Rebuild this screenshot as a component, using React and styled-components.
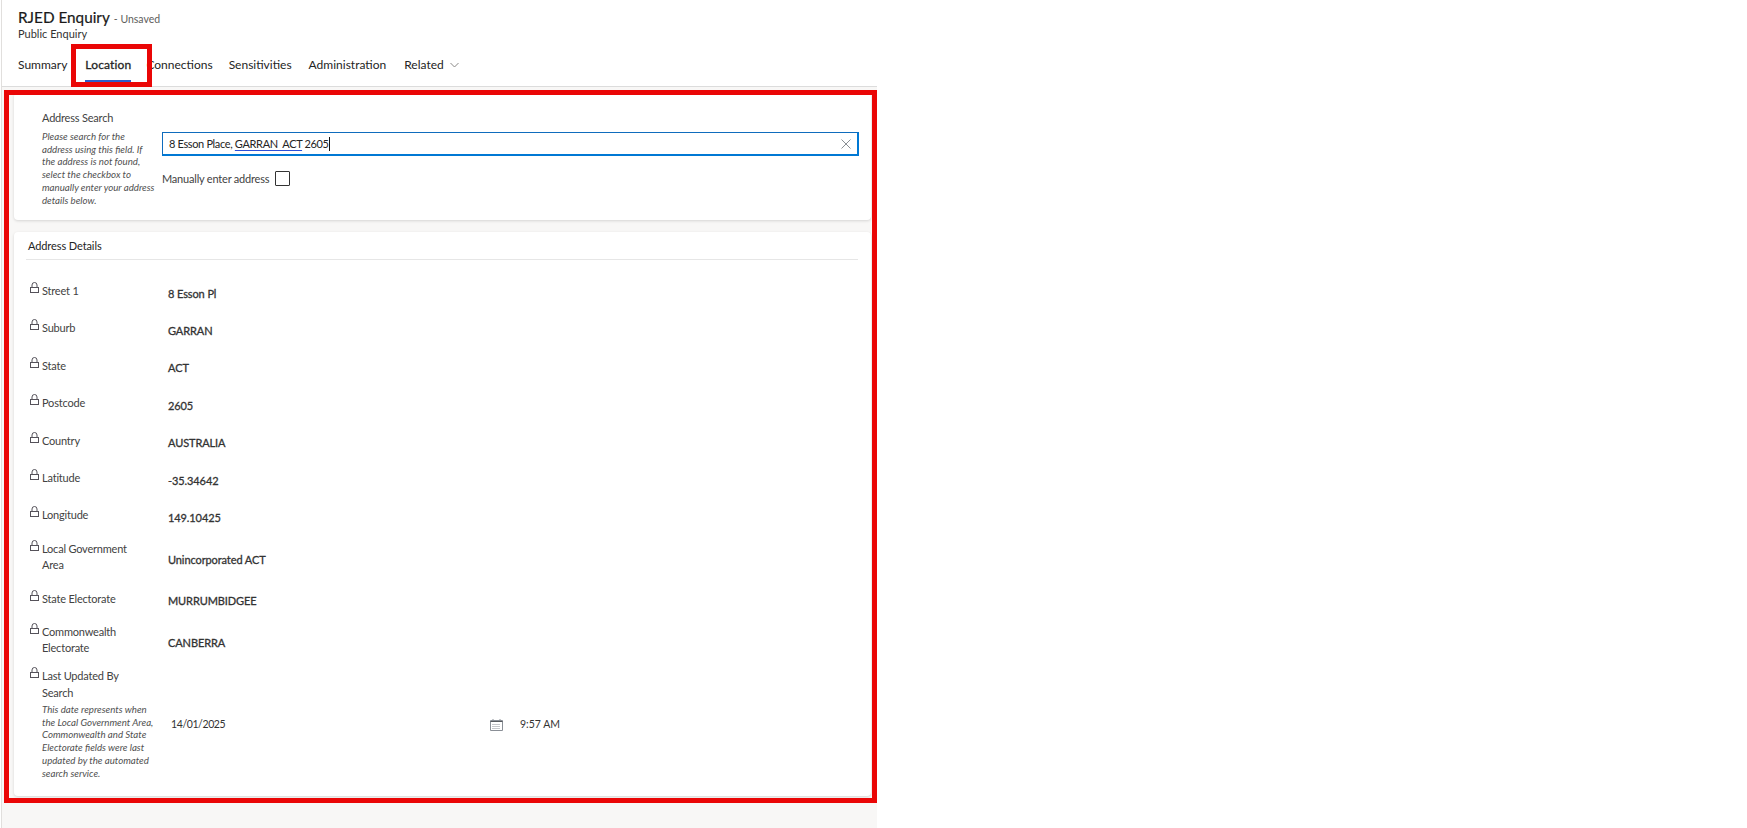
import styled, { createGlobalStyle } from 'styled-components';

const GlobalStyle = createGlobalStyle`
  html, body {
    margin: 0;
    padding: 0;
    background: #fff;
    font-family: "Lato", "Open Sans", sans-serif;
    color: #242424;
  }
  * { box-sizing: border-box; }
`;

const Page = styled.div`
  position: relative;
  width: 1747px;
  height: 828px;
  overflow: hidden;
`;

const Panel = styled.div`
  width: 876px;
  height: 828px;
  border-left: 1px solid #e1dfdd;
  margin-left: 1px;
  display: flex;
  flex-direction: column;
`;

const Header = styled.header`
  height: 87px;
  background: #fff;
  border-bottom: 1px solid #dcdcdc;
  padding: 7px 0 0 16px;
  flex: none;
`;

const TitleRow = styled.div`
  display: flex;
  align-items: baseline;
  gap: 4px;
  height: 20px;
`;

const Title = styled.h1`
  margin: 0;
  font-size: 15.3px;
  line-height: 20px;
  font-weight: 400;
  color: #1a1a1a;
  -webkit-text-stroke: 0.2px #1a1a1a;
`;

const Unsaved = styled.span`
  font-size: 10.5px;
  color: #605e5c;
`;

const SubTitle = styled.div`
  font-size: 11px;
  line-height: 14px;
  color: #333;
`;

const Tabs = styled.nav`
  display: flex;
  margin-top: 15px;
`;

const Tab = styled.div`
  position: relative;
  font-size: 12px;
  line-height: 18px;
  margin-right: ${(p) => p.$gap}px;
  color: #242424;
  display: flex;
  align-items: center;
  gap: 6px;
  font-weight: 400;
  ${(p) => p.$active && `
    -webkit-text-stroke: 0.3px #242424;
    letter-spacing: 0.15px;
    &::after {
      content: "";
      position: absolute;
      left: 0;
      right: 0;
      top: 24px;
      height: 2px;
      background: #2b5ccb;
    }
  `}
`;

const Content = styled.main`
  flex: 1;
  background: #f8f7f6;
  padding: 6px 6px 0 12px;
  display: flex;
  flex-direction: column;
  gap: 12px;
`;

const Card = styled.section`
  background: #fff;
  border-radius: 4px;
  box-shadow: 0 1px 3px rgba(0, 0, 0, 0.14);
  height: ${(p) => p.$height}px;
  flex: none;
`;

const SearchGrid = styled.div`
  display: grid;
  grid-template-columns: 148px 697px;
  padding-top: 17px;
`;

const FieldLabel = styled.div`
  padding-left: 28px;
  font-size: 11px;
  letter-spacing: -0.2px;
  line-height: 16px;
  color: #424242;
`;

const HelpText = styled.div`
  font-size: 9.7px;
  letter-spacing: 0;
  line-height: 12.7px;
  font-style: italic;
  color: #505050;
  margin-top: ${(p) => p.$top}px;
  width: 116px;
  white-space: nowrap;
`;

const SearchColumn = styled.div`
  padding-top: 22px;
`;

const SearchBox = styled.div`
  height: 24px;
  border: 1px solid #0f6cbd;
  border-bottom: 2px solid #0078d4;
  border-right: 2px solid #0078d4;
  display: flex;
  align-items: center;
  justify-content: space-between;
  padding: 0 6px 0 6px;
  font-size: 11px;
  letter-spacing: -0.35px;
  color: #242424;
  white-space: pre;
`;

const Underlined = styled.span`
  text-decoration: underline;
  text-decoration-color: #2b4fd8;
  text-underline-offset: 2px;
`;

const Caret = styled.span`
  display: inline-block;
  width: 1px;
  height: 14px;
  background: #111;
  vertical-align: -3px;
`;

const CheckRow = styled.label`
  display: flex;
  align-items: center;
  gap: 6px;
  margin-top: 15px;
  font-size: 11px;
  letter-spacing: -0.2px;
  color: #424242;
`;

const CheckBox = styled.span`
  width: 15px;
  height: 15px;
  border: 1px solid #333;
  border-radius: 1px;
  display: block;
`;

const SectionTitle = styled.h2`
  margin: 0 13px 0 12px;
  height: 28px;
  padding: 6px 0 0 2px;
  font-size: 11px;
  letter-spacing: -0.1px;
  line-height: 16px;
  font-weight: 400;
  color: #242424;
  border-bottom: 1px solid #e6e6e6;
`;

const Rows = styled.div`
  padding-top: 12px;
`;

const Row = styled.div`
  display: grid;
  grid-template-columns: 138px 1fr;
  align-items: center;
  height: ${(p) => p.$height || 37.4}px;
  padding-left: 16px;
`;

const LockLabel = styled.div`
  display: flex;
  align-items: flex-start;
  gap: 3px;
  padding-top: 1px;
  font-size: 11px;
  letter-spacing: -0.2px;
  line-height: 16.5px;
  color: #424242;
  svg { flex: none; margin-top: -1px; }
`;

const Value = styled.div`
  padding-top: 5px;
  font-size: 11px;
  letter-spacing: -0.1px;
  color: #333;
  -webkit-text-stroke: 0.3px #333;
`;

const DateRow = styled.div`
  display: flex;
  align-items: center;
  font-size: 10.5px;
  color: #333;
  padding: 2px 0 0 3px;
`;

const DatePart = styled.span`
  width: 319px;
  letter-spacing: -0.4px;
`;

const TimePart = styled.span`
  margin-left: 17px;
`;

// red annotation boxes drawn on the screenshot
const Marker = styled.div`
  position: absolute;
  left: ${(p) => p.$x}px;
  top: ${(p) => p.$y}px;
  width: ${(p) => p.$w}px;
  height: ${(p) => p.$h}px;
  border: 5px solid #ea0606;
  pointer-events: none;
`;

function LockIcon() {
  return (
    <svg width="9" height="12" viewBox="0 0 9 12" fill="none" stroke="#55525a" strokeWidth="1">
      <path d="M2 5.5V3a2.5 2.5 0 0 1 5 0V5.5" />
      <rect x="0.5" y="5.5" width="8" height="5" />
    </svg>
  );
}

function ClearIcon() {
  return (
    <svg width="10" height="10" viewBox="0 0 10 10" stroke="#8a8f94" strokeWidth="1">
      <path d="M.5.5l9 9M9.5.5l-9 9" />
    </svg>
  );
}

function CalendarIcon() {
  return (
    <svg width="13" height="13" viewBox="0 0 13 13" fill="none" stroke="#8a8f96" strokeWidth="1">
      <path d="M.5 2.5h12v10H.5z" />
      <path d="M.5 3.5h12" stroke="#55595e" />
      <path d="M3 1v2M10 1v2" />
      <path d="M2.5 6.5h8M2.5 8.5h8M2.5 10.5h8" strokeDasharray="1 1" />
    </svg>
  );
}

function Chevron() {
  return (
    <svg width="9" height="6" viewBox="0 0 9 6" fill="none" stroke="#8a8886" strokeWidth="1">
      <path d="M.5 1l4 4 4-4" />
    </svg>
  );
}

const fields = [
  { label: 'Street 1', value: '8 Esson Pl' },
  { label: 'Suburb', value: 'GARRAN' },
  { label: 'State', value: 'ACT' },
  { label: 'Postcode', value: '2605' },
  { label: 'Country', value: 'AUSTRALIA' },
  { label: 'Latitude', value: '-35.34642' },
  { label: 'Longitude', value: '149.10425' },
  { label: <>Local Government<br />Area</>, value: 'Unincorporated ACT', height: 46 },
  { label: 'State Electorate', value: 'MURRUMBIDGEE' },
  { label: <>Commonwealth<br />Electorate</>, value: 'CANBERRA', height: 45 },
];

export default function App() {
  return (
    <Page>
      <GlobalStyle />
      <Panel>
        <Header>
          <TitleRow>
            <Title>RJED Enquiry</Title>
            <Unsaved>- Unsaved</Unsaved>
          </TitleRow>
          <SubTitle>Public Enquiry</SubTitle>
          <Tabs>
            <Tab $gap={18}>Summary</Tab>
            <Tab $gap={15} $active>Location</Tab>
            <Tab $gap={16}>Connections</Tab>
            <Tab $gap={17}>Sensitivities</Tab>
            <Tab $gap={18}>Administration</Tab>
            <Tab $gap={0}>Related <Chevron /></Tab>
          </Tabs>
        </Header>
        <Content>
          <Card $height={127}>
            <SearchGrid>
              <FieldLabel>
                Address Search
                <HelpText $top={4}>
                  Please search for the<br />
                  address using this field. If<br />
                  the address is not found,<br />
                  select the checkbox to<br />
                  manually enter your address<br />
                  details below.
                </HelpText>
              </FieldLabel>
              <SearchColumn>
                <SearchBox>
                  <span>8 Esson Place, <Underlined>GARRAN  ACT</Underlined> 2605<Caret /></span>
                  <ClearIcon />
                </SearchBox>
                <CheckRow>
                  Manually enter address
                  <CheckBox />
                </CheckRow>
              </SearchColumn>
            </SearchGrid>
          </Card>
          <Card $height={564}>
            <SectionTitle>Address Details</SectionTitle>
            <Rows>
              {fields.map((f, i) => (
                <Row key={i} $height={f.height}>
                  <LockLabel>
                    <LockIcon />
                    <span>{f.label}</span>
                  </LockLabel>
                  <Value>{f.value}</Value>
                </Row>
              ))}
              <Row $height={122}>
                <LockLabel>
                  <LockIcon />
                  <div>
                    Last Updated By<br />Search
                    <HelpText $top={2}>
                      This date represents when<br />
                      the Local Government Area,<br />
                      Commonwealth and State<br />
                      Electorate fields were last<br />
                      updated by the automated<br />
                      search service.
                    </HelpText>
                  </div>
                </LockLabel>
                <DateRow>
                  <DatePart>14/01/2025</DatePart>
                  <CalendarIcon />
                  <TimePart>9:57 AM</TimePart>
                </DateRow>
              </Row>
            </Rows>
          </Card>
        </Content>
      </Panel>
      <Marker $x={71} $y={44} $w={81} $h={43} />
      <Marker $x={4} $y={90} $w={873} $h={713} />
    </Page>
  );
}
